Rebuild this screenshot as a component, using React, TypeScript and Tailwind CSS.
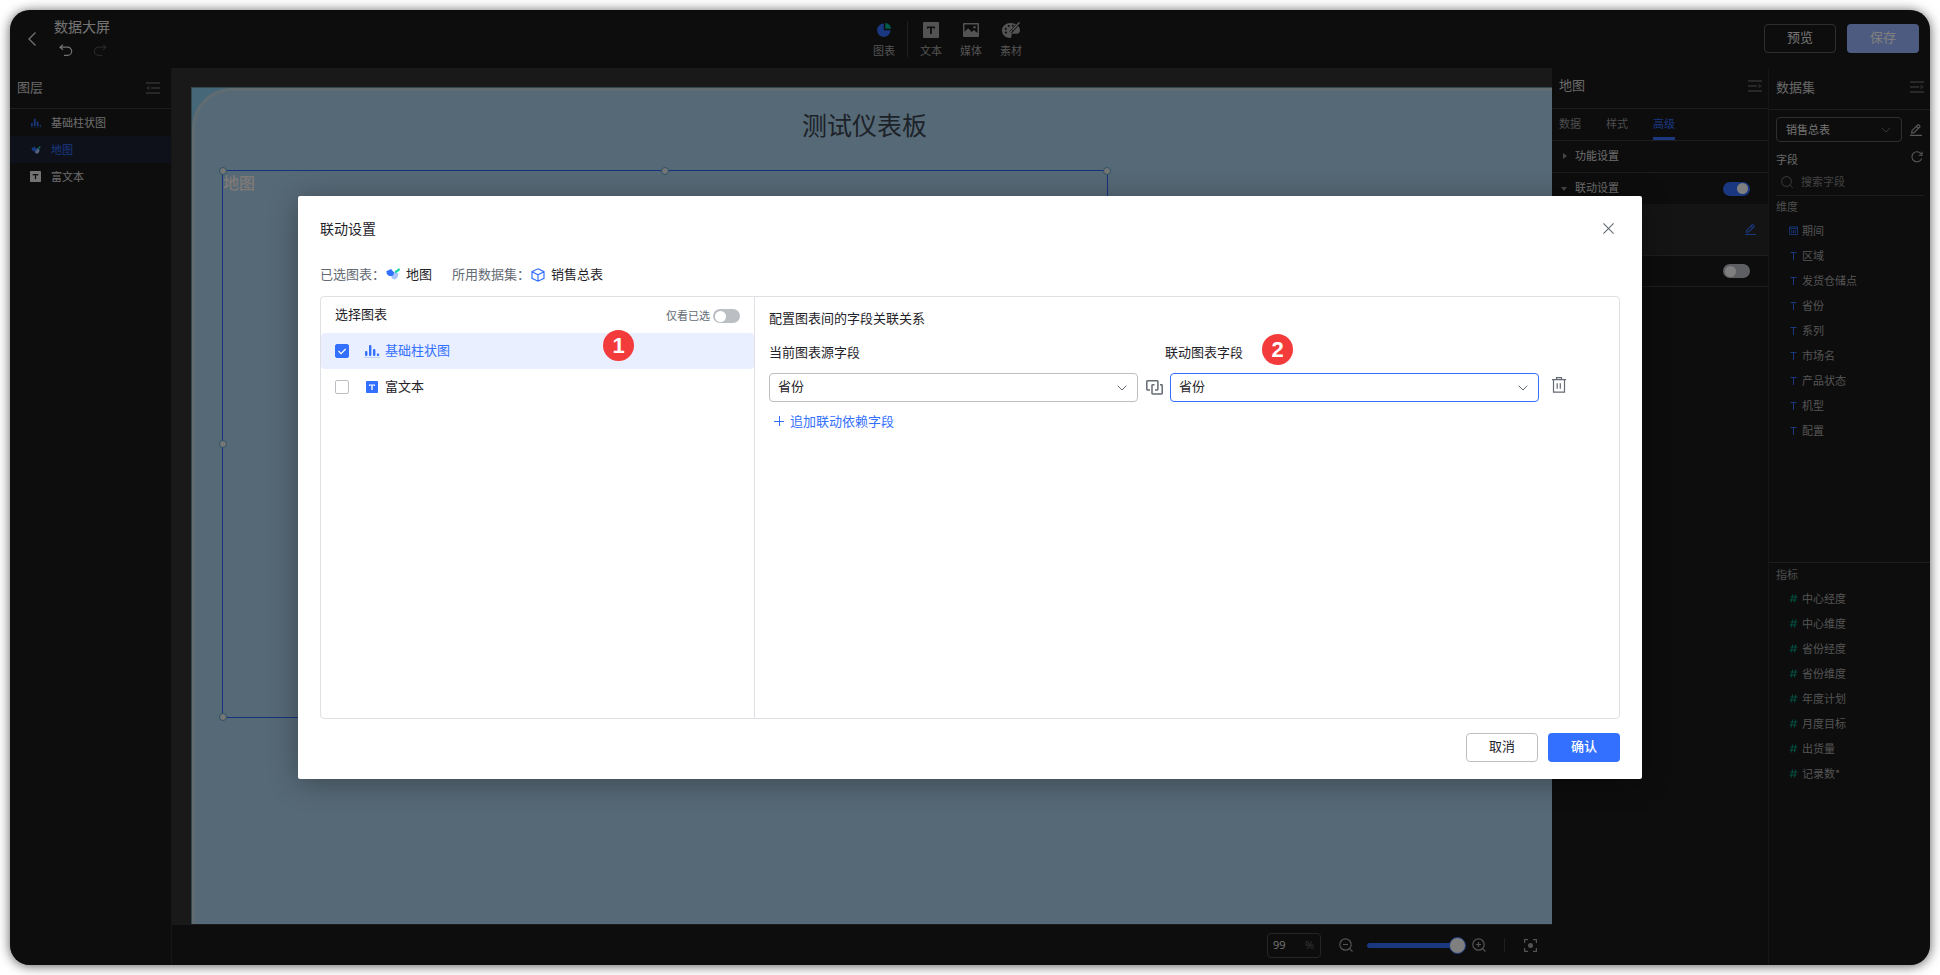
import type { ReactNode } from "react";

const FONT = "font-['Noto_Sans_CJK_SC',sans-serif]";

/* ---------- icons ---------- */

function BarIcon({ className }: { className?: string }) {
  return (
    <svg className={className} viewBox="0 0 16 14" fill="currentColor" aria-hidden="true">
      <rect x="1" y="7" width="2.400" height="5" rx="1" />
      <rect x="5" y="1" width="2.400" height="11" rx="1" />
      <rect x="9" y="5" width="2.400" height="7" rx="1" />
      <rect x="12.800" y="9.500" width="2.400" height="2.500" rx="1" />
      <rect x="0" y="12.900" width="16" height="0.800" opacity="0.300" />
    </svg>
  );
}

function MapIcon({ className }: { className?: string }) {
  return (
    <svg className={className} viewBox="0 0 14 12" aria-hidden="true">
      <path d="M5.6 7.2 7 5l3.6-.8 1.9 1.6-1 3.6-2.6 2.2-3.1-1.2z" fill="#a9c3ff" />
      <path d="M.3 3.2 2.8 2l2.3-.9 1.6 2L8.3 4.400 7 7.600 5.300 8.300 2.600 7.800.9 6z" fill="#3370ff" />
      <path d="M8.400 4.300 9.300 2.600 11.300 2.100 11.600.7 13.300.2 14 1.700 12.900 3.300 11.300 3.900 10 5.300z" fill="#16d3a6" />
    </svg>
  );
}

function TextBoxIcon({ className, ink }: { className?: string; ink: string }) {
  return (
    <svg className={className} viewBox="0 0 16 16" aria-hidden="true">
      <rect width="16" height="16" rx="1" fill="currentColor" />
      <path d="M4 4.500h8v2.200h-1.300v-.7H8.900v6H7.100V6H5.300v.7H4z" fill={ink} />
    </svg>
  );
}

function EditIcon({ className }: { className?: string }) {
  return (
    <svg className={className} viewBox="0 0 12 12" fill="none" stroke="currentColor" strokeWidth="1.200" aria-hidden="true">
      <path d="M1.600 9 2 6.700 7.700 1a.9.9 0 0 1 1.200 0l.8.8a.9.9 0 0 1 0 1.200L4 8.600zM6.500 2.300l2 2" />
      <path d="M0 11.400h12" />
    </svg>
  );
}

function FoldIcon({ className, flip }: { className?: string; flip?: boolean }) {
  return (
    <svg className={className} viewBox="0 0 14 12" fill="currentColor" aria-hidden="true">
      <path d="M0 0h14v2H0zM0 10h14v2H0z" />
      {flip ? <path d="M0 5h9v2H0zM10.500 3.500 14 6l-3.500 2.500z" /> : <path d="M5 5h9v2H5zM3.500 3.500 0 6l3.500 2.500z" />}
    </svg>
  );
}

function ChevronDown({ className }: { className?: string }) {
  return (
    <svg className={className} viewBox="0 0 10 6" fill="none" stroke="currentColor" aria-hidden="true">
      <path d="m.7.7 4.300 4.300L9.300.7" />
    </svg>
  );
}

function CalendarIcon({ className }: { className?: string }) {
  return (
    <svg className={className} viewBox="0 0 10 10" fill="none" stroke="currentColor" aria-hidden="true">
      <path d="M.5 1h9v8.500h-9zM.5 2.700h9M3 4.500v3.500M5 4.500v3.500M7 4.500v3.500" />
    </svg>
  );
}

/* ---------- controls ---------- */

function Switch({ label, on }: { label: string; on?: boolean }) {
  return (
    <input
      type="checkbox"
      role="switch"
      aria-label={label}
      defaultChecked={on}
      className="flex h-3.5 w-[27px] shrink-0 appearance-none items-center rounded-full bg-[#bbbfc4] px-0.5 before:block before:size-[11px] before:rounded-full before:bg-white checked:justify-end checked:bg-[#3370ff]"
    />
  );
}

function Check({ id, on }: { id: string; on?: boolean }) {
  return (
    <span className="relative flex size-3.5 shrink-0">
      <input
        id={id}
        type="checkbox"
        defaultChecked={on}
        className="peer size-3.5 appearance-none rounded-xs border border-[#bbbfc4] bg-white checked:border-[#3370ff] checked:bg-[#3370ff]"
      />
      <svg
        className="pointer-events-none absolute inset-0 hidden size-3.5 peer-checked:block"
        viewBox="0 0 14 14"
        fill="none"
        stroke="#fff"
        strokeWidth="1.200"
        aria-hidden="true"
      >
        <path d="m3.500 7 2.600 2.600L10.600 5" />
      </svg>
    </span>
  );
}

function FieldSelect({ label, border }: { label: string; border: string }) {
  return (
    <div className="relative min-w-0 flex-1">
      <select
        aria-label={label}
        className={`${border} block h-[29px] w-full appearance-none rounded border bg-white px-2 pb-1 text-[13px] leading-5 text-[#1f2329] outline-none`}
      >
        <option>省份</option>
        <option>区域</option>
      </select>
      <ChevronDown className="pointer-events-none absolute top-3 right-[11px] h-1.5 w-2.5 text-[#646a73]" />
    </div>
  );
}

/* ---------- header ---------- */

function Tool({ label, children }: { label: string; children: ReactNode }) {
  return (
    <button className="flex w-10 flex-col items-center gap-1 pt-0.5 text-[11px] leading-4 text-[#a6a6a6]">
      <span className="flex h-4 items-center">{children}</span>
      {label}
    </button>
  );
}

function Header() {
  return (
    <header className="flex h-[58px] shrink-0 items-center justify-between pr-[11px]">
      <div className="flex w-[121px] items-center pl-[18px]">
        <button aria-label="返回" className="text-[#e6e6e6]">
          <svg className="h-3.5 w-2" viewBox="0 0 8 14" fill="none" stroke="currentColor" strokeWidth="1.300">
            <path d="M7.500.5 1 7l6.500 6.500" />
          </svg>
        </button>
        <div className="ml-[18px] flex flex-col gap-2 pb-1.5">
          <h1 className="text-[14px] leading-5 whitespace-nowrap text-[#e6e6e6]">数据大屏</h1>
          <div className="flex gap-5 pl-[5px]">
            <button aria-label="撤销" className="text-[#e6e6e6]">
              <svg className="h-3 w-3.5" viewBox="0 0 14 12" fill="none" stroke="currentColor" strokeWidth="1.200">
                <path d="M4 .6 1 3.200l3 2.600M1 3.200h7.600a4.100 4.100 0 0 1 0 8.200H5" />
              </svg>
            </button>
            <button aria-label="重做" disabled className="text-[#4c4c4c]">
              <svg className="h-3 w-3.5" viewBox="0 0 14 12" fill="none" stroke="currentColor" strokeWidth="1.200">
                <path d="m10 .6 3 2.600-3 2.600M13 3.200H5.400a4.100 4.100 0 0 0 0 8.200H9" />
              </svg>
            </button>
          </div>
        </div>
      </div>
      <nav className="flex items-center" aria-label="组件">
        <Tool label="图表">
          <svg className="size-3.5" viewBox="0 0 14 14" aria-hidden="true">
            <path d="M6.800.5v6.700h6.700A6.700 6.700 0 1 1 6.800.5z" fill="#3370ff" />
            <path d="M8.300 0A6 6 0 0 1 14 5.700H8.300z" fill="#00b894" />
          </svg>
        </Tool>
        <span className="mx-[3px] h-9 w-px bg-[#3c3c3c]" />
        <Tool label="文本">
          <TextBoxIcon className="size-4" ink="#1a1a1a" />
        </Tool>
        <Tool label="媒体">
          <svg className="h-3.5 w-4" viewBox="0 0 16 14" aria-hidden="true">
            <path
              d="M1 0h14a1 1 0 0 1 1 1v12a1 1 0 0 1-1 1H1a1 1 0 0 1-1-1V1a1 1 0 0 1 1-1zm.5 1.500v7.200l3.700-3.400 3.600 3.600 2-1.900 3.700 3V1.500z"
              fill="currentColor"
              fillRule="evenodd"
            />
            <circle cx="11.500" cy="4.200" r="1.200" fill="currentColor" />
          </svg>
        </Tool>
        <Tool label="素材">
          <svg className="h-4 w-[18px]" viewBox="0 0 18 16" aria-hidden="true">
            <path
              d="M8.500 1C3.800 1 0 4.300 0 8.600 0 12.800 3.500 16 7.700 16c1.500 0 2-.8 1.800-1.900-.3-1.300.2-2.300 1.700-2.300h3.500c2 0 3.300-1.400 3.300-3.500C18 4 13.500 1 8.500 1z"
              fill="currentColor"
            />
            <g fill="#1a1a1a">
              <circle cx="4" cy="10.500" r="1.100" />
              <circle cx="3.800" cy="6.800" r="1.100" />
              <circle cx="6.800" cy="4" r="1.100" />
              <circle cx="10.800" cy="3.700" r="1" />
            </g>
            <path d="M17.500.5 8.500 10.500" stroke="#1a1a1a" strokeWidth="2.800" />
            <path d="M17.500.3 10.500 8M10 8.300l-1.800 2.600" stroke="currentColor" strokeWidth="1.600" />
          </svg>
        </Tool>
      </nav>
      <div className="flex gap-[11px] pb-0.5 text-[13px]">
        <button className="h-[29px] w-[72px] rounded border border-[#5f5f5f] pb-0.5 text-[#e6e6e6]">预览</button>
        <button className="h-[29px] w-[72px] rounded bg-[#99b7ff] pb-0.5 text-white">保存</button>
      </div>
    </header>
  );
}

/* ---------- layers ---------- */

function Layers() {
  const row = "flex h-[27px] w-full items-center gap-[9px] pl-5 text-[11px]";
  return (
    <aside className="w-[162px] shrink-0 border-r border-[#2c2c2c]">
      <div className="flex h-[41px] items-center justify-between border-b border-[#3a3a3a] pr-[11px] pl-[7px]">
        <h2 className="pb-0.5 text-[13px] text-[#d0d0d0]">图层</h2>
        <button aria-label="收起图层" className="text-[#505050]">
          <FoldIcon className="h-3 w-3.5" />
        </button>
      </div>
      <ul className="text-[#dcdcdc]">
        <li>
          <button className={row}>
            <BarIcon className="h-2.5 w-3 text-[#3370ff]" />
            基础柱状图
          </button>
        </li>
        <li>
          <button className={`${row} bg-[#1c2233] text-[#3370ff]`}>
            <MapIcon className="h-2 w-3" />
            地图
          </button>
        </li>
        <li>
          <button className={row}>
            <span className="flex w-3 text-[#e6e6e6]">
              <TextBoxIcon className="size-[11px]" ink="#1a1a1a" />
            </span>
            富文本
          </button>
        </li>
      </ul>
    </aside>
  );
}

/* ---------- canvas ---------- */

const handle = "absolute size-2 -translate-x-1/2 -translate-y-1/2 rounded-full border border-[#5aa9c8] bg-[#ededed]";

function Canvas() {
  return (
    <main className="flex min-w-0 flex-1 flex-col">
      <div className="flex flex-1 bg-[#333] pt-[19px] pl-[19px]">
        <div className="relative flex-1 overflow-hidden border-t border-l border-[#6d93a5] bg-[#8ccfee]">
          <div className="absolute inset-0 rounded-tl-[40px] border-t-[3px] border-l-[3px] border-[#c2d8e4] bg-[#acd2ec]" />
          <p className="absolute top-4 left-[610px] text-[25px] leading-10 text-[#3a4450]">测试仪表板</p>
          <div className="absolute top-[82px] left-[30px] h-[548px] w-[886px] border border-[#2f62ff]">
            <p className="text-[16px] leading-[22px] font-medium text-[#fff4ee]">地图</p>
            <span className={`${handle} top-0 left-0`} />
            <span className={`${handle} top-0 left-1/2`} />
            <span className={`${handle} top-0 left-full`} />
            <span className={`${handle} top-1/2 left-0`} />
            <span className={`${handle} top-1/2 left-full`} />
            <span className={`${handle} top-full left-0`} />
            <span className={`${handle} top-full left-1/2`} />
            <span className={`${handle} top-full left-full`} />
          </div>
        </div>
      </div>
      <footer className="flex h-[41px] shrink-0 items-center justify-end border-t border-[#333] pr-[15px] text-[#a6a6a6]">
        <label className="flex h-[25px] w-[54px] items-center rounded border border-[#4a4a4a] pr-1.5 pl-[5px] font-['Open_Sans','Noto_Sans_CJK_SC',sans-serif] text-[11px]">
          <input aria-label="缩放比例" defaultValue="99" className="w-full min-w-0 bg-transparent font-medium text-[#e6e6e6] outline-none" />
          <span className="text-[#6a6a6a]">%</span>
        </label>
        <button aria-label="缩小" className="ml-[18px]">
          <svg className="size-3.5" viewBox="0 0 14 14" fill="none" stroke="currentColor" strokeWidth="1.200">
            <circle cx="6.500" cy="6.500" r="5.700" />
            <path d="M4 6.500h5M10.600 10.600l2.900 2.900" />
          </svg>
        </button>
        <input
          type="range"
          aria-label="缩放"
          defaultValue={100}
          className="ml-3.5 h-[18px] w-[99px] appearance-none bg-transparent [&::-webkit-slider-runnable-track]:h-[5px] [&::-webkit-slider-runnable-track]:rounded-full [&::-webkit-slider-runnable-track]:bg-[#3370ff] [&::-webkit-slider-thumb]:-mt-1.5 [&::-webkit-slider-thumb]:size-[17px] [&::-webkit-slider-thumb]:appearance-none [&::-webkit-slider-thumb]:rounded-full [&::-webkit-slider-thumb]:border [&::-webkit-slider-thumb]:border-[#3370ff] [&::-webkit-slider-thumb]:bg-white"
        />
        <button aria-label="放大" className="ml-1.5">
          <svg className="size-3.5" viewBox="0 0 14 14" fill="none" stroke="currentColor" strokeWidth="1.200">
            <circle cx="6.500" cy="6.500" r="5.700" />
            <path d="M4 6.500h5M6.500 4v5M10.600 10.600l2.900 2.900" />
          </svg>
        </button>
        <span className="mr-[19px] ml-[18px] h-3.5 w-px bg-[#3c3c3c]" />
        <button aria-label="适应画布">
          <svg className="size-[13px]" viewBox="0 0 13 13" fill="none" stroke="currentColor" strokeWidth="1.200">
            <path d="M.6 4V.6H4M9 .6h3.400V4M12.400 9v3.400H9M4 12.400H.6V9" />
            <circle cx="6.500" cy="6.500" r="2.500" fill="currentColor" stroke="none" />
          </svg>
        </button>
      </footer>
    </main>
  );
}

/* ---------- chart settings ---------- */

function Settings() {
  return (
    <aside className="w-[216px] shrink-0 text-[11px] text-[#dcdcdc]">
      <div className="flex h-[41px] items-center justify-between border-b border-[#3a3a3a] pr-1.5 pb-1 pl-[7px]">
        <h2 className="pb-0.5 text-[13px] text-[#d0d0d0]">地图</h2>
        <button aria-label="收起设置" className="text-[#505050]">
          <FoldIcon className="h-3 w-3.5" flip />
        </button>
      </div>
      <div className="flex h-8 gap-[25px] border-b border-[#3a3a3a] pl-[7px] text-[#999]">
        <button className="pb-0.5">数据</button>
        <button className="pb-0.5">样式</button>
        <button className="border-b-3 border-[#3370ff] pt-px text-[#3370ff]">高级</button>
      </div>
      <div className="flex h-8 items-center gap-2 border-b border-[#3a3a3a] pb-0.5 pl-[11px]">
        <svg className="h-1.5 w-1" viewBox="0 0 4 6" fill="#8c8c8c" aria-hidden="true">
          <path d="M0 0v6l4-3z" />
        </svg>
        功能设置
      </div>
      <div className="flex h-[31px] items-center gap-1.5 pr-[18px] pl-[9px]">
        <svg className="h-1 w-1.5" viewBox="0 0 6 4" fill="#8c8c8c" aria-hidden="true">
          <path d="M0 0h6L3 4z" />
        </svg>
        <span className="flex-1 pb-0.5 pl-0.5">联动设置</span>
        <Switch label="联动设置" on />
      </div>
      <div className="flex h-[52px] items-center justify-end border-b border-[#3a3a3a] bg-[#282828] pr-3">
        <button aria-label="编辑联动" className="text-[#3370ff]">
          <EditIcon className="size-[11px]" />
        </button>
      </div>
      <div className="flex h-[31px] items-center justify-end border-b border-[#3a3a3a] pr-[18px]">
        <Switch label="跳转设置" />
      </div>
    </aside>
  );
}

/* ---------- dataset ---------- */

const dimensions = ["期间", "区域", "发货仓储点", "省份", "系列", "市场名", "产品状态", "机型", "配置"];
const measures = ["中心经度", "中心维度", "省份经度", "省份维度", "年度计划", "月度目标", "出货量", "记录数*"];

function Dataset() {
  return (
    <aside className="flex w-[162px] shrink-0 flex-col border-l border-[#2c2c2c] text-[11px] text-[#a6a6a6]">
      <div className="flex h-[42px] shrink-0 items-center justify-between border-b border-[#3a3a3a] pr-1.5 pb-1 pl-[7px]">
        <h2 className="text-[13px] text-[#d0d0d0]">数据集</h2>
        <button aria-label="收起数据集" className="text-[#505050]">
          <FoldIcon className="h-3 w-3.5" flip />
        </button>
      </div>
      <div className="flex shrink-0 items-center gap-2 pt-[7px] pr-2 pl-[7px]">
        <div className="relative flex-1">
          <select
            aria-label="数据集"
            className="block h-[25px] w-full appearance-none rounded border border-[#5f5f5f] bg-[#1a1a1a] px-[9px] text-[11px] text-[#e6e6e6] outline-none"
          >
            <option>销售总表</option>
          </select>
          <ChevronDown className="pointer-events-none absolute top-2.5 right-[11px] h-1.5 w-2.5 text-[#6a6a6a]" />
        </div>
        <button aria-label="编辑数据集" className="text-[#b0b0b0]">
          <EditIcon className="size-3" />
        </button>
      </div>
      <div className="flex h-[30px] shrink-0 items-center justify-between pr-[7px] pl-[7px] text-[#d0d0d0]">
        <span className="pt-1">字段</span>
        <button aria-label="刷新字段" className="text-[#b0b0b0]">
          <svg className="size-3" viewBox="0 0 12 12" fill="none" stroke="currentColor" strokeWidth="1.100">
            <path d="M10.700 7.300A5 5 0 1 1 10.300 3.300M11 .8v3.400H7.600" />
          </svg>
        </button>
      </div>
      <label className="mr-1.5 ml-[7px] flex h-6 shrink-0 items-center gap-2 border-b border-[#3a3a3a] pb-1 pl-[5px]">
        <svg className="size-3 shrink-0 text-[#7a7a7a]" viewBox="0 0 12 12" fill="none" stroke="currentColor">
          <circle cx="5.500" cy="5.500" r="4.900" />
          <path d="m9.300 9.300 2.400 2.400" />
        </svg>
        <input placeholder="搜索字段" className="w-full min-w-0 bg-transparent outline-none placeholder:text-[#858585]" />
      </label>
      <section className="flex-10">
        <h3 className="h-[22px] pl-[7px] leading-5 text-[#999]">维度</h3>
        <ul>
          {dimensions.map((name, i) => (
            <li key={name} className="flex h-[25px] items-center gap-1 pl-5">
              {i === 0 ? (
                <CalendarIcon className="size-[9px] text-[#3370ff]" />
              ) : (
                <svg className="size-[9px] text-[#3370ff]" viewBox="0 0 9 9" stroke="currentColor" fill="none" aria-hidden="true">
                  <path d="M1.500 1.500h6M4.500 1.500v7.500" />
                </svg>
              )}
              {name}
            </li>
          ))}
        </ul>
      </section>
      <section className="flex-11 border-t border-[#3a3a3a]">
        <h3 className="h-[23px] pl-[7px] leading-[22px] text-[#999]">指标</h3>
        <ul>
          {measures.map((name) => (
            <li key={name} className="flex h-[25px] items-center gap-1 pl-5">
              <svg className="size-[9px] text-[#00a889]" viewBox="0 0 9 9" stroke="currentColor" strokeWidth="0.900" fill="none" aria-hidden="true">
                <path d="M1.500 3h7M.5 6h7M3.700.500 2.200 8.500M6.800.500 5.300 8.500" />
              </svg>
              {name}
            </li>
          ))}
        </ul>
      </section>
    </aside>
  );
}

/* ---------- dialog ---------- */

function Badge({ n, place }: { n: number; place: string }) {
  return (
    <span
      className={`${place} absolute flex size-[31px] items-center justify-center rounded-full bg-[#f43b3b] font-['Liberation_Sans',sans-serif] text-[22px] leading-none font-bold text-white`}
    >
      {n}
    </span>
  );
}

function LinkageDialog() {
  return (
    <div
      role="dialog"
      aria-label="联动设置"
      className="flex w-[70%] flex-col self-start rounded-xs bg-white px-[22px] pb-[17px] text-[13px] leading-5 text-[#1f2329] shadow-[0_4px_30px_rgba(0,0,0,0.3)]"
    >
      <div className="flex h-[66px] items-center justify-between pr-1.5">
        <h2 className="pb-0.5 text-[14px]">联动设置</h2>
        <button aria-label="关闭" className="pb-px text-[#646a73]">
          <svg className="size-[11px]" viewBox="0 0 11 11" fill="none" stroke="currentColor" strokeWidth="1.100">
            <path d="m.4.4 10.200 10.200M10.600.4.4 10.600" />
          </svg>
        </button>
      </div>
      <div className="flex h-[34px] items-start pt-0.5">
        <span className="w-[66px] whitespace-nowrap text-[#646a73]">已选图表：</span>
        <MapIcon className="mt-1 mr-1.5 h-3 w-3.5" />
        <span>地图</span>
        <span className="ml-5 w-[79px] whitespace-nowrap text-[#646a73]">所用数据集：</span>
        <svg className="mt-1 mr-1.5 size-3.5" viewBox="0 0 14 14" fill="none" stroke="#3370ff" strokeWidth="1.200" aria-hidden="true">
          <path d="M7 .8 13 3.600v6.800L7 13.200 1 10.400V3.600zM1 3.800l6 3 6-3M7 6.800v6" />
        </svg>
        <span>销售总表</span>
      </div>
      <div className="flex h-[423px] rounded border border-[#dee0e3]">
        <div className="relative w-[434px] shrink-0 border-r border-[#dee0e3]">
          <div className="flex h-9 items-center pr-3.5 pl-3.5">
            <h3 className="flex-1 pb-0.5">选择图表</h3>
            <label className="flex items-center gap-[3px] text-[11px] text-[#646a73]">
              仅看已选
              <span className="flex pt-0.5">
                <Switch label="仅看已选" />
              </span>
            </label>
          </div>
          <label htmlFor="bar" className="flex h-9 items-center rounded bg-[#e9efff] pl-3.5 text-[#3370ff]">
            <Check id="bar" on />
            <BarIcon className="mr-[5px] ml-[15px] h-3.5 w-4" />
            <span className="pb-0.5">基础柱状图</span>
          </label>
          <label htmlFor="rich" className="flex h-9 items-center pl-3.5">
            <Check id="rich" />
            <TextBoxIcon className="mr-[7px] ml-[17px] size-3 text-[#3370ff]" ink="#fff" />
            <span className="pb-0.5">富文本</span>
          </label>
          <Badge n={1} place="top-[33px] left-[282px]" />
        </div>
        <div className="relative min-w-0 flex-1 pt-[11px] pl-3.5">
          <h3>配置图表间的字段关联关系</h3>
          <div className="flex pt-3.5 pr-[58px]">
            <span className="flex-1">当前图表源字段</span>
            <span className="flex-1">
              <span className="relative">
                联动图表字段
                <Badge n={2} place="-top-2 left-[97px]" />
              </span>
            </span>
          </div>
          <div className="flex items-center pt-[11px] pr-[53px]">
            <FieldSelect label="当前图表源字段" border="border-[#bbbfc4]" />
            <svg
              className="mr-[7px] ml-2 h-[15px] w-[17px] shrink-0 text-[#646a73]"
              viewBox="0 0 17 15"
              fill="none"
              stroke="currentColor"
              strokeWidth="1.500"
              aria-hidden="true"
            >
              <path d="M4 10H1.500a.7.7 0 0 1-.7-.7V1.500a.7.700 0 0 1 .7-.7h9.700a.7.700 0 0 1 .7.700V9.300a.7.700 0 0 1-.7.700H9" />
              <path d="M8.500 4.700H6.700a.7.700 0 0 0-.7.700v7.800a.7.700 0 0 0 .7.700h8.800a.7.700 0 0 0 .7-.7V5.400a.7.700 0 0 0-.7-.7H14" />
            </svg>
            <FieldSelect label="联动图表字段" border="border-[#3370ff]" />
            <button aria-label="删除" className="ml-[13px] pb-1.5 text-[#646a73]">
              <svg className="h-4 w-3.5" viewBox="0 0 14 16" fill="none" stroke="currentColor" strokeWidth="1.200">
                <path d="M0 2.700h14M4.500 2.500V.7h5v1.800M1.500 2.700v12.500h11V2.700M5.200 6.200v5.500M8.300 6.200v5.500" />
              </svg>
            </button>
          </div>
          <button className="mt-[9px] ml-[5px] flex items-center gap-1.5 text-[#3370ff]">
            <svg className="size-2.5" viewBox="0 0 10 10" fill="none" stroke="currentColor" aria-hidden="true">
              <path d="M0 5.500h10M5.500 0v10" />
            </svg>
            追加联动依赖字段
          </button>
        </div>
      </div>
      <div className="flex justify-end gap-2.5 pt-3.5">
        <button className="h-[29px] w-[72px] rounded border border-[#bbbfc4] pb-1">取消</button>
        <button className="h-[29px] w-[72px] rounded bg-[#3370ff] pb-1 font-medium text-white">确认</button>
      </div>
    </div>
  );
}

export default function App() {
  return (
    <div className={`${FONT} flex min-h-screen bg-white p-2.5`}>
      <div className="relative flex min-w-0 flex-1 flex-col overflow-hidden rounded-[20px] bg-[#1a1a1a] shadow-[0_1px_12px_rgba(0,0,0,0.65)]">
        <Header />
        <div className="flex flex-1">
          <Layers />
          <Canvas />
          <Settings />
          <Dataset />
        </div>
        <div className="absolute inset-0 flex justify-center bg-black/50 pt-[186px]">
          <LinkageDialog />
        </div>
      </div>
    </div>
  );
}
